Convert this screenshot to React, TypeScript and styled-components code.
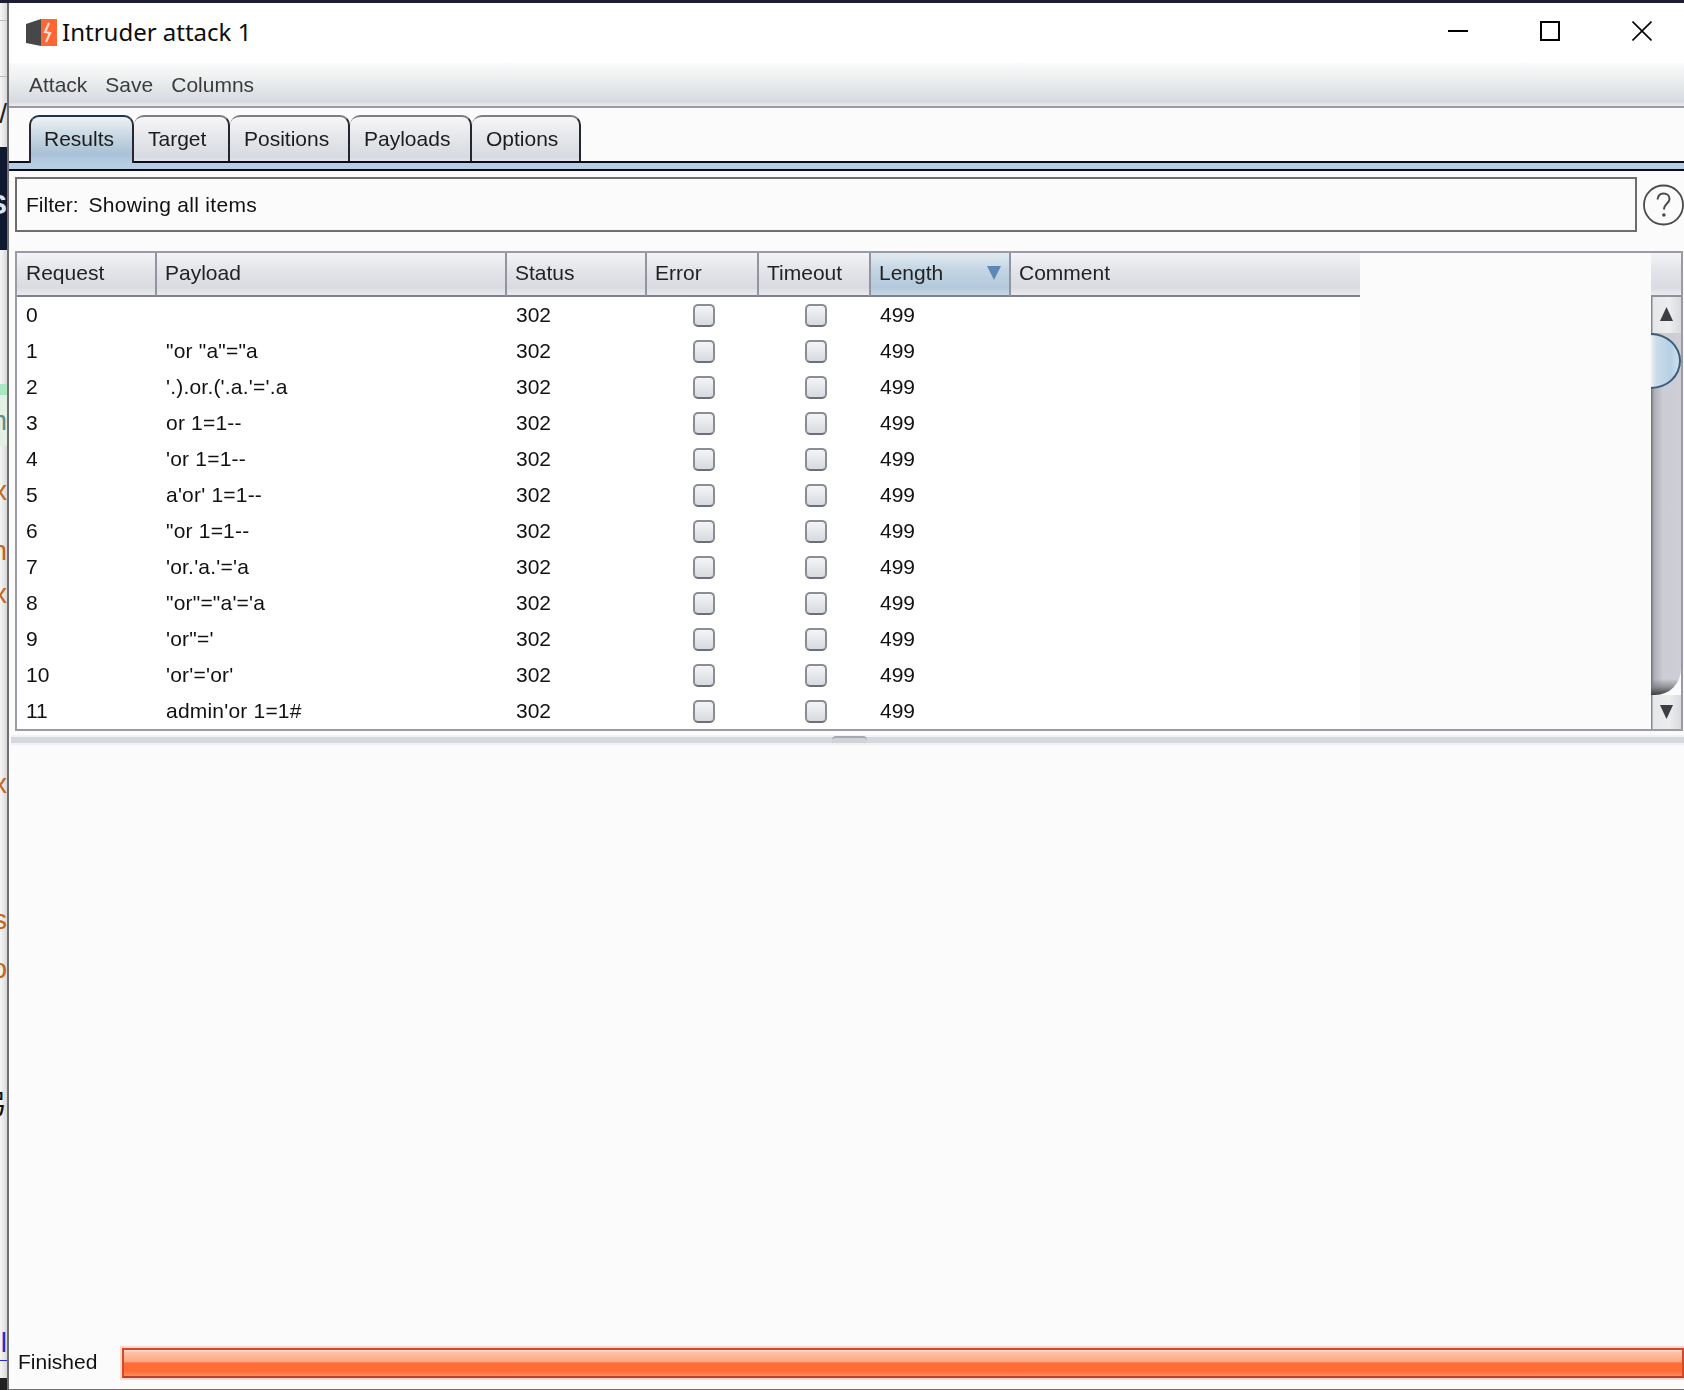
import React from "react";
import styled, { createGlobalStyle } from "styled-components";

const GlobalStyle = createGlobalStyle`
  html, body {
    margin: 0;
    padding: 0;
    height: 100%;
    overflow: hidden;
    background: #1d1d35;
  }
  * { box-sizing: border-box; }
`;

const UI_FONT = `"Liberation Sans", Arial, sans-serif`;

const rows = [
  "",
  `"or "a"="a`,
  `'.).or.('.a.'='.a`,
  "or 1=1--",
  "'or 1=1--",
  "a'or' 1=1--",
  `"or 1=1--`,
  "'or.'a.'='a",
  `"or"="a'='a`,
  `'or"='`,
  "'or'='or'",
  "admin'or 1=1#",
];

const tabs = [
  { name: "Results", width: 105 },
  { name: "Target", width: 96 },
  { name: "Positions", width: 120 },
  { name: "Payloads", width: 122 },
  { name: "Options", width: 109 },
];

const columns = ["Request", "Payload", "Status", "Error", "Timeout", "Length", "Comment"];
const GRID = "138px 350px 140px 112px 112px 140px 351px";

const ORANGE = "#c4661c";

// the slice of desktop still visible left of the window
const deskBands = [
  { h: 17, bg: "transparent" },
  { h: 1, bg: "#bdbdbd" },
  { h: 55, bg: "transparent" },
  { h: 1, bg: "#bdbdbd" },
  { h: 13, bg: "transparent" },
  { h: 48, bg: "transparent", glyph: "/", color: "#222" },
  { h: 9, bg: "transparent" },
  { h: 33, bg: "#0f1a30" },
  { h: 50, bg: "#0f1a30", glyph: "S", color: "#dfe3ea", bold: true },
  { h: 20, bg: "#0f1a30" },
  { h: 134, bg: "transparent" },
  { h: 11, bg: "#a8e8c0" },
  { h: 51, bg: "#e4efe6", glyph: "m", color: "#5f8f86" },
  { h: 25, bg: "transparent" },
  { h: 40, bg: "transparent", glyph: "x", color: ORANGE },
  { h: 20, bg: "transparent" },
  { h: 40, bg: "transparent", glyph: "n", color: ORANGE },
  { h: 3, bg: "transparent" },
  { h: 40, bg: "transparent", glyph: "x", color: ORANGE },
  { h: 150, bg: "transparent" },
  { h: 40, bg: "transparent", glyph: "x", color: ORANGE },
  { h: 96, bg: "transparent" },
  { h: 40, bg: "transparent", glyph: "s", color: ORANGE },
  { h: 9, bg: "transparent" },
  { h: 40, bg: "transparent", glyph: "o", color: ORANGE },
  { h: 96, bg: "transparent" },
  { h: 40, bg: "transparent", glyph: "弓", color: "#111" },
  { h: 200, bg: "transparent" },
  { h: 35, bg: "transparent", glyph: "l", color: "#2a2ad0" },
  { h: 1, bg: "#2a2ad0" },
  { h: 17, bg: "transparent" },
  { h: 12, bg: "#222" },
];

const Page = styled.div`
  width: 1684px;
  height: 1390px;
  display: flex;
  flex-direction: column;
  font-family: ${UI_FONT}, "Noto Sans CJK SC";
`;

const TopStrip = styled.div`
  height: 3px;
  flex: none;
  background: #1d1d35;
`;

const Body = styled.div`
  flex: 1;
  min-height: 0;
  display: flex;
`;

const Desk = styled.div`
  width: 7px;
  flex: none;
  display: flex;
  flex-direction: column;
  overflow: hidden;
  background: linear-gradient(to right, #f6f6f6, #d9d9d9);
`;

const DeskBand = styled.div<{ $h: number; $bg: string; $color?: string; $bold?: boolean }>`
  height: ${(p) => p.$h}px;
  flex: none;
  display: flex;
  justify-content: flex-end;
  align-items: center;
  overflow: hidden;
  background: ${(p) => p.$bg};
  color: ${(p) => p.$color || "#222"};
  font-size: 28px;
  line-height: 1;
  font-weight: ${(p) => (p.$bold ? 700 : 400)};
`;

const Win = styled.div`
  flex: 1;
  min-width: 0;
  display: flex;
  flex-direction: column;
  background: #fbfbfb;
  border-left: 2px solid #6f6f6f;
  border-bottom: 1px solid #6e6e6e;
`;

const TitleBar = styled.div`
  height: 60px;
  flex: none;
  display: flex;
  align-items: center;
  padding: 0 32px 0 16px;
  background: #ffffff;
`;

const Title = styled.div`
  margin: -4px 0 0 5px;
  flex: 1;
  font-family: "Noto Sans", "Open Sans", sans-serif;
  font-size: 24px;
  color: #0c0c0c;
`;

const WinButtons = styled.div`
  display: flex;
  gap: 72px;
  margin-top: -5px;
`;

// the java part of the window: the screenshot has it scaled up, so it is soft
const JavaPane = styled.div`
  flex: 1;
  min-height: 0;
  display: flex;
  flex-direction: column;
  filter: blur(0.4px);
`;

const MenuBar = styled.div`
  height: 45px;
  flex: none;
  display: flex;
  align-items: center;
  gap: 18px;
  padding-left: 20px;
  font-size: 21px;
  color: #3c3c3c;
  background: linear-gradient(to bottom, #f9fbfa 0%, #eff1f2 30%, #dde0e4 75%, #d6d9de 90%, #e6e8ea 97%);
  border-bottom: 2px solid #9a9ba4;
`;

const TabStrip = styled.div`
  height: 55px;
  flex: none;
  display: flex;
  align-items: flex-end;
  padding-left: 20px;
  border-bottom: 2px solid #0b0b1e;
`;

const Tab = styled.div<{ $w: number; $active?: boolean }>`
  width: ${(p) => p.$w}px;
  height: ${(p) => (p.$active ? 48 : 46)}px;
  flex: none;
  margin-bottom: ${(p) => (p.$active ? "-2px" : "0")};
  padding: 4px 0 0 ${(p) => (p.$active ? 13 : 14)}px;
  font-size: 21px;
  line-height: 36px;
  color: #1c1c1c;
  border: 2px solid #24272f;
  border-left-width: ${(p) => (p.$active ? "2px" : "0")};
  border-top-color: ${(p) => (p.$active ? "#1e3550" : "#7c7d85")};
  border-bottom: 0;
  border-radius: 10px 10px 0 0;
  background: ${(p) =>
    p.$active
      ? "linear-gradient(to bottom, #eef2f5 0%, #c9d8e3 40%, #a9c1d6 80%, #b6cde2 100%)"
      : "linear-gradient(to bottom, #f6f6f8 0%, #e6e7eb 45%, #d7dae1 90%, #e2e4e9 100%)"};
`;

const TabBand = styled.div`
  height: 8px;
  flex: none;
  background: #b6cde2;
  border-bottom: 2px solid #0b0b1e;
`;

const Content = styled.div`
  flex: 1;
  min-height: 0;
  display: flex;
  flex-direction: column;
`;

const FilterRow = styled.div`
  display: flex;
  align-items: center;
  gap: 6px;
  margin-top: 6px;
  padding-left: 6px;
`;

const FilterBox = styled.div`
  width: 1622px;
  height: 55px;
  flex: none;
  display: flex;
  align-items: center;
  padding-left: 9px;
  font-size: 21px;
  color: #111;
  border: 2px solid #6e6e6e;
`;

const FilterText = styled.span`
  margin-left: 10px;
  letter-spacing: 0.3px;
`;

const TableFrame = styled.div`
  margin: 19px 1px 0 6px;
  height: 480px;
  flex: none;
  display: flex;
  border: 2px solid #9a9ba4;
`;

const TableMain = styled.div`
  flex: 1;
  min-width: 0;
`;

const Grid = styled.div`
  display: grid;
  grid-template-columns: ${GRID};
  width: 1343px;
`;

const HeadCell = styled.div<{ $active?: boolean; $first?: boolean }>`
  height: 44px;
  display: flex;
  align-items: center;
  justify-content: space-between;
  padding: 0 8px 2px ${(p) => (p.$first ? "9px" : "8px")};
  font-size: 21px;
  color: #222;
  border-left: ${(p) => (p.$first ? "0" : "2px solid #9295a0")};
  border-bottom: 2px solid #7e818b;
  background: ${(p) =>
    p.$active
      ? "linear-gradient(to bottom, #e3ebf1 0%, #c3d5e3 40%, #b3c9dc 82%, #c6d7e5 100%)"
      : "linear-gradient(to bottom, #f3f4f6 0%, #e3e5e9 40%, #d9dbe1 82%, #e9ebee 100%)"};

  &:last-child {
    border-right: 2px solid #8e9099;
  }
`;

const Cell = styled.div<{ $first?: boolean }>`
  height: 36px;
  display: flex;
  align-items: center;
  padding-left: ${(p) => (p.$first ? "9px" : "11px")};
  font-size: 21px;
  color: #111;
  background: #ffffff;
  white-space: pre;
`;

const PayloadCell = styled(Cell)`
  letter-spacing: 0.2px;
`;

const CheckCell = styled(Cell)`
  justify-content: center;
  padding-left: 6px;
`;

const Check = styled.span`
  width: 22px;
  height: 23px;
  display: block;
  border: 2px solid #8a8d95;
  border-bottom-color: #6c6f77;
  border-radius: 5px;
  background: linear-gradient(to bottom, #f5f6f7, #d6d9df);
`;

const Scrollbar = styled.div`
  width: 30px;
  flex: none;
  display: flex;
  flex-direction: column;
`;

const ScrollCorner = styled.div`
  height: 44px;
  flex: none;
  border-bottom: 2px solid #8e9099;
  background: linear-gradient(to bottom, #f3f4f6 0%, #e3e5e9 40%, #d9dbe1 82%, #e9ebee 100%);
`;

const ScrollButton = styled.div<{ $h: number }>`
  height: ${(p) => p.$h}px;
  flex: none;
  display: flex;
  justify-content: center;
  padding-top: 10px;
  background: linear-gradient(to right, #85878e 0, #85878e 1px, #e6e7ea 2px, #eceded 60%, #d9dade 100%);
`;

const Track = styled.div`
  flex: 1;
  min-height: 0;
  overflow: hidden;
  border-bottom-right-radius: 26px;
  background: linear-gradient(to top, #3c3c40 0, rgba(120, 120, 126, 0.7) 8px, transparent 16px),
    linear-gradient(to right, #6f7076 0, #adaeb5 3px, #cbccd4 40%, #cdced6 100%);
`;

const Thumb = styled.div`
  width: 60px;
  height: 56px;
  margin-left: -30px;
  border-radius: 50%;
  border: 2px solid #3c5c78;
  background: linear-gradient(to right, #eceff2 50%, #cadcea 60%, #b7d0e5 85%, #cfe0ee 100%);
`;

const Splitter = styled.div`
  margin: 4px 0 0 2px;
  height: 10px;
  flex: none;
  display: flex;
  justify-content: center;
  padding-left: 3px;
  background: linear-gradient(to bottom, #f1f2f4 0 2px, #d5d8df 2px 8px, #f0f1f3 8px);
`;

const SplitHandle = styled.div`
  width: 35px;
  height: 7px;
  margin-top: 1px;
  border-top: 2px solid #a6a8b0;
  border-radius: 4px 4px 0 0;
  background: #cfd2d9;
`;

const Lower = styled.div`
  flex: 1;
  min-height: 0;
`;

const Footer = styled.div`
  height: 41px;
  flex: none;
  display: flex;
  align-items: flex-start;
  padding-left: 9px;
`;

const FooterLabel = styled.div`
  font-size: 21px;
  line-height: 28px;
  color: #111;
`;

const ProgressBar = styled.div`
  flex: 1;
  height: 30px;
  margin-left: 25px;
  border: 2px solid #d5482c;
  border-bottom-color: #c03c30;
  box-shadow: 0 0 0 2px #fcd9cd;
  background: linear-gradient(
    to bottom,
    #ffe9de 0,
    #ffc3a6 8%,
    #ffa683 45%,
    #ff6c36 50%,
    #ff6c36 80%,
    #ff8a5c 100%
  );
`;

const BurpLogo = () => (
  <svg width="32" height="28" viewBox="0 0 32 28">
    <polygon points="1,5 16,0 16,27 1,24" fill="#474747" />
    <rect x="16" y="0" width="16" height="27" fill="#ff6633" />
    <path d="M24 4 L20 13 L25 14 L21 23" fill="none" stroke="#fde0d2" strokeWidth="2.2" />
  </svg>
);

const MinimizeIcon = () => (
  <svg width="20" height="20" viewBox="0 0 20 20">
    <path d="M0 10h20" stroke="#000" strokeWidth="2" />
  </svg>
);

const MaximizeIcon = () => (
  <svg width="20" height="20" viewBox="0 0 20 20">
    <rect x="1" y="1" width="18" height="18" fill="none" stroke="#000" strokeWidth="2" />
  </svg>
);

const CloseIcon = () => (
  <svg width="20" height="20" viewBox="0 0 20 20">
    <path d="M0.5 0.5 19.5 19.5M19.5 0.5 0.5 19.5" stroke="#000" strokeWidth="1.6" />
  </svg>
);

const HelpIcon = () => (
  <svg width="41" height="42" viewBox="0 0 41 42">
    <circle cx="20.5" cy="21" r="19.5" fill="none" stroke="#4a4a4a" strokeWidth="1.8" />
    <path
      d="M14.5 15.5c0.5-4 3-6 6-6 3.5 0 6 2.4 6 5.4 0 4.6-5.6 4.8-5.6 10.6"
      fill="none"
      stroke="#4a4a4a"
      strokeWidth="2"
    />
    <circle cx="20.9" cy="31" r="1.8" fill="#4a4a4a" />
  </svg>
);

const SortArrow = () => (
  <svg width="14" height="14" viewBox="0 0 14 14">
    <polygon points="0,0 14,0 7,14" fill="#5d87b4" />
  </svg>
);

const ArrowUp = () => (
  <svg width="13" height="14" viewBox="0 0 13 14">
    <polygon points="6.5,0 13,14 0,14" fill="#3d3d42" />
  </svg>
);

const ArrowDown = () => (
  <svg width="13" height="14" viewBox="0 0 13 14">
    <polygon points="0,0 13,0 6.5,14" fill="#3d3d42" />
  </svg>
);

const App = () => (
  <>
    <GlobalStyle />
    <Page>
      <TopStrip />
      <Body>
        <Desk>
          {deskBands.map((b, i) => (
            <DeskBand key={i} $h={b.h} $bg={b.bg} $color={b.color} $bold={b.bold}>
              {b.glyph}
            </DeskBand>
          ))}
        </Desk>
        <Win>
          <TitleBar>
            <BurpLogo />
            <Title>Intruder attack 1</Title>
            <WinButtons>
              <MinimizeIcon />
              <MaximizeIcon />
              <CloseIcon />
            </WinButtons>
          </TitleBar>
          <JavaPane>
            <MenuBar>
              <span>Attack</span>
              <span>Save</span>
              <span>Columns</span>
            </MenuBar>
            <TabStrip>
              {tabs.map((t, i) => (
                <Tab key={t.name} $w={t.width} $active={i === 0}>
                  {t.name}
                </Tab>
              ))}
            </TabStrip>
            <TabBand />
            <Content>
              <FilterRow>
                <FilterBox>
                  <span>Filter:</span>
                  <FilterText>Showing all items</FilterText>
                </FilterBox>
                <HelpIcon />
              </FilterRow>
              <TableFrame>
                <TableMain>
                  <Grid>
                    {columns.map((c, i) => (
                      <HeadCell key={c} $first={i === 0} $active={c === "Length"}>
                        {c}
                        {c === "Length" && <SortArrow />}
                      </HeadCell>
                    ))}
                    {rows.map((payload, i) => (
                      <React.Fragment key={i}>
                        <Cell $first>{i}</Cell>
                        <PayloadCell>{payload}</PayloadCell>
                        <Cell>302</Cell>
                        <CheckCell>
                          <Check />
                        </CheckCell>
                        <CheckCell>
                          <Check />
                        </CheckCell>
                        <Cell>499</Cell>
                        <Cell />
                      </React.Fragment>
                    ))}
                  </Grid>
                </TableMain>
                <Scrollbar>
                  <ScrollCorner />
                  <ScrollButton $h={36}>
                    <ArrowUp />
                  </ScrollButton>
                  <Track>
                    <Thumb />
                  </Track>
                  <ScrollButton $h={34}>
                    <ArrowDown />
                  </ScrollButton>
                </Scrollbar>
              </TableFrame>
              <Splitter>
                <SplitHandle />
              </Splitter>
              <Lower />
              <Footer>
                <FooterLabel>Finished</FooterLabel>
                <ProgressBar />
              </Footer>
            </Content>
          </JavaPane>
        </Win>
      </Body>
    </Page>
  </>
);

export default App;
